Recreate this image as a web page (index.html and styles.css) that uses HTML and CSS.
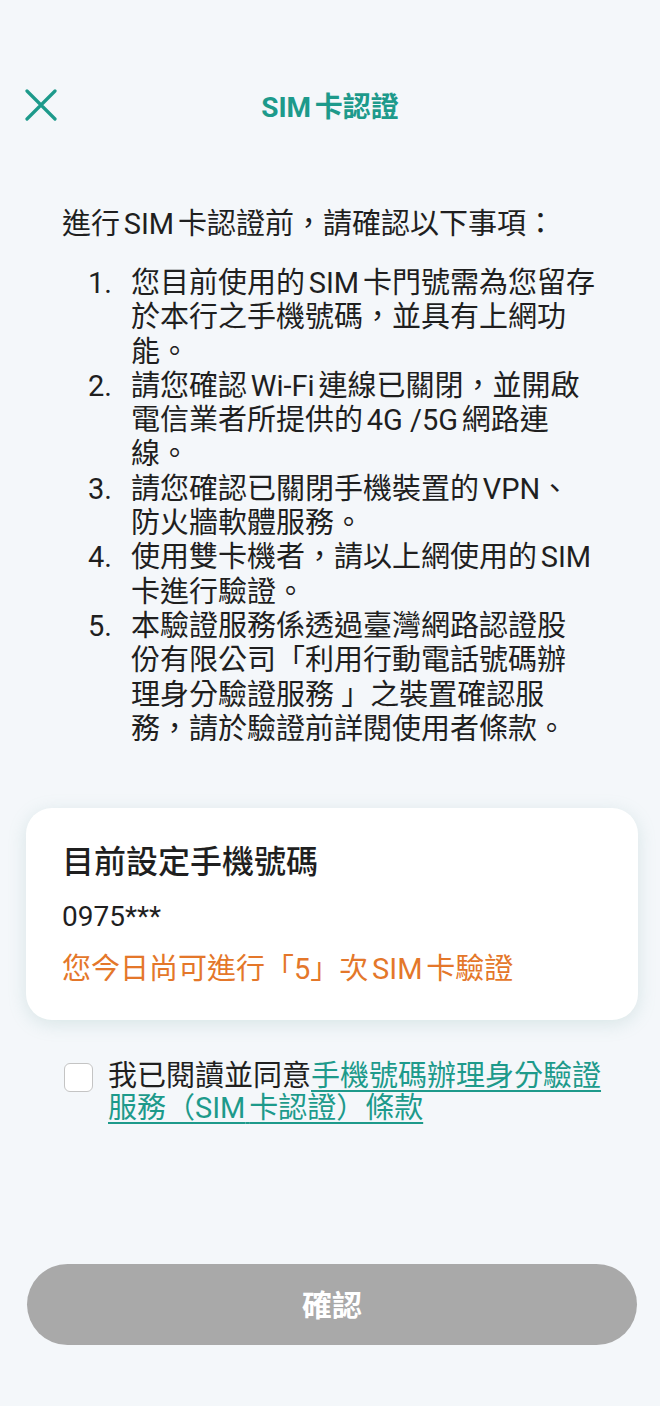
FILE: index.html
```html
<!DOCTYPE html>
<html lang="zh-Hant">
<head>
<meta charset="utf-8">
<title>SIM卡認證</title>
<link rel="stylesheet" href="styles.css">
</head>
<body>
<div class="page">
  <header class="header">
    <button class="close" aria-label="關閉">
      <svg width="32" height="32" viewBox="0 0 32 32"><path d="M2 2 L30 30 M30 2 L2 30" stroke="#1d9a8b" stroke-width="3.2" stroke-linecap="round" fill="none"/></svg>
    </button>
    <h1 class="title">SIM<span class="lg"> </span>卡認證</h1>
  </header>

  <p class="intro">進行<span class="lg"> </span>SIM<span class="lg"> </span>卡認證前，請確認以下事項：</p>

  <ol class="notes">
    <li><span class="num">1.</span><span class="txt">您目前使用的<span class="lg"> </span>SIM<span class="lg"> </span>卡門號需為您留存<br>於本行之手機號碼，並具有上網功<br>能。</span></li>
    <li><span class="num">2.</span><span class="txt">請您確認<span class="lg"> </span>Wi-Fi<span class="lg"> </span>連線已關閉，並開啟<br>電信業者所提供的<span class="lg"> </span>4G /5G<span class="lg"> </span>網路連<br>線。</span></li>
    <li><span class="num">3.</span><span class="txt">請您確認已關閉手機裝置的<span class="lg"> </span>VPN、<br>防火牆軟體服務。</span></li>
    <li><span class="num">4.</span><span class="txt">使用雙卡機者，請以上網使用的<span class="lg"> </span>SIM<br>卡進行驗證。</span></li>
    <li><span class="num">5.</span><span class="txt">本驗證服務係透過臺灣網路認證股<br>份有限公司「利用行動電話號碼辦<br>理身分驗證服務 」之裝置確認服<br>務，請於驗證前詳閱使用者條款。</span></li>
  </ol>

  <section class="card">
    <h2 class="card-title">目前設定手機號碼</h2>
    <p class="phone">0975***</p>
    <p class="remain">您今日尚可進行「5」次<span class="lg"> </span>SIM<span class="lg"> </span>卡驗證</p>
  </section>

  <label class="agree">
    <span class="box"></span>
    <span class="agree-text">我已閱讀並同意<a class="link" href="#">手機號碼辦理身分驗證<br>服務（SIM<span class="lg"> </span>卡認證）條款</a></span>
  </label>

  <footer class="footer">
    <button class="confirm">確認</button>
  </footer>
</div>
</body>
</html>
```

FILE: styles.css
```css
* { box-sizing: border-box; }
html, body { margin: 0; padding: 0; }
body {
  background: #f4f7fa;
  font-family: Roboto, "Noto Sans CJK TC", sans-serif;
  color: #1f1f1f;
}
.page {
  min-height: 100vh;
  display: flex;
  flex-direction: column;
}
.lg {
  font-size: 15px;
  line-height: 0;
}
.header {
  position: relative;
  height: 60px;
  margin-top: 75px;
  display: flex;
  align-items: center;
  justify-content: center;
}
.close {
  position: absolute;
  left: 25px;
  top: 14px;
  width: 32px;
  height: 32px;
  padding: 0;
  border: 0;
  background: none;
  display: flex;
}
.title {
  margin: 0;
  font-size: 28px;
  font-weight: 700;
  color: #1d9a8b;
}
.intro {
  margin: 72px 0 0 62px;
  font-size: 29px;
  line-height: 34px;
}
.notes {
  list-style: none;
  margin: 25px 0 0 0;
  padding: 0 0 0 88px;
  font-size: 29px;
  line-height: 34.3px;
}
.notes li {
  display: flex;
}
.num {
  width: 43px;
  flex: none;
}
.txt { flex: 1; }
.card {
  margin: 62px 22px 0 26px;
  background: #fff;
  border-radius: 26px;
  padding: 34px 36px 33px;
  box-shadow: 0 4px 18px rgba(120, 170, 165, 0.22);
}
.card-title {
  margin: 0;
  font-size: 32px;
  line-height: 40px;
  font-weight: 500;
}
.phone {
  margin: 17px 0 0;
  font-size: 28px;
  line-height: 36px;
}
.remain {
  margin: 16px 0 0;
  font-size: 29px;
  line-height: 36px;
  color: #e4772a;
}
.agree {
  display: flex;
  margin: 40px 0 0 64px;
}
.box {
  flex: none;
  width: 29px;
  height: 29px;
  margin-top: 3px;
  border: 1.5px solid #c4c4c4;
  border-radius: 6px;
  background: #fff;
}
.agree-text {
  margin-left: 15px;
  font-size: 29px;
  line-height: 32px;
}
.link {
  color: #1d9a8b;
  text-decoration: underline;
  text-underline-offset: 4px;
  text-decoration-thickness: 2px;
}
.footer {
  margin-top: auto;
  padding: 0 23px 61px 27px;
}
.confirm {
  display: block;
  width: 100%;
  height: 81px;
  padding: 0 0 4px;
  border: 0;
  border-radius: 41px;
  background: #a9a9a9;
  color: #fff;
  font-family: Roboto, "Noto Sans CJK TC", sans-serif;
  font-size: 30px;
  font-weight: 700;
}
```
